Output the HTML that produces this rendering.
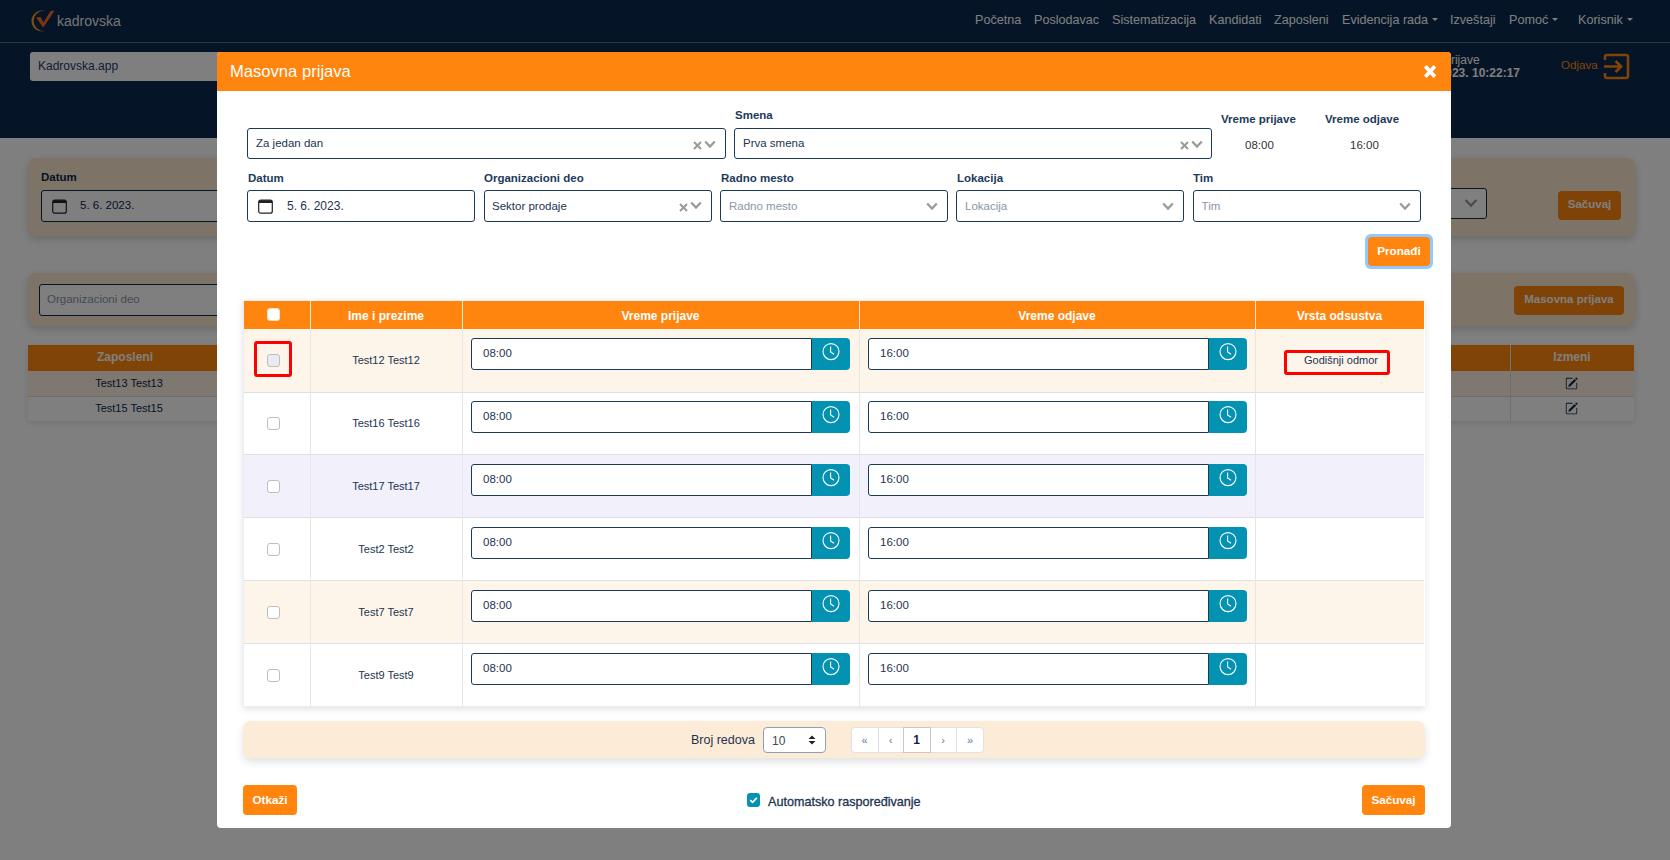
<!DOCTYPE html>
<html><head><meta charset="utf-8">
<style>
*{box-sizing:border-box;margin:0;padding:0}
html,body{width:1670px;height:860px;overflow:hidden}
body{position:relative;background:#fff;font-family:"Liberation Sans",sans-serif;color:#1d3450}
.a{position:absolute}
.t{position:absolute;line-height:1;white-space:nowrap}
.b{font-weight:bold}
/* background page */
.nav{position:absolute;left:0;top:0;width:1670px;height:43px;background:#0a284c;border-bottom:1px solid #5a6a80}
.sub{position:absolute;left:0;top:43px;width:1670px;height:95px;background:#0a284c}
.navi{position:absolute;top:13.5px;font-size:12.6px;line-height:1;color:#fff;white-space:nowrap}
.caret{display:inline-block;width:0;height:0;border-left:3px solid transparent;border-right:3px solid transparent;border-top:3.5px solid #fff;vertical-align:middle;margin-left:4px;position:relative;top:-1px}
.card{position:absolute;left:28px;width:1607px;background:#fae6ce;border-radius:8px;box-shadow:0 3px 8px rgba(0,0,0,.18)}
.binp{position:absolute;border:1px solid #0d2a4a;border-radius:3px;background:#fff}
.obtn{position:absolute;background:#ff850e;border-radius:4px;color:#fff;font-weight:bold;font-size:11.5px;line-height:1;text-align:center}
.overlay{position:absolute;left:0;top:0;width:1670px;height:860px;background:rgba(0,0,0,.5)}
/* modal */
.modal{position:absolute;left:217px;top:52px;width:1234px;height:776px;background:#fff;border-radius:4px;overflow:hidden}
.mh{position:absolute;left:0;top:0;width:1234px;height:39px;background:#ff850e}
.lbl{position:absolute;line-height:1;font-size:12px;font-weight:bold;color:#1d3a5a;white-space:nowrap}
.inp{position:absolute;border:1px solid #1b3a58;border-radius:3px;background:#fff;white-space:nowrap}
.it{position:absolute;line-height:1;font-size:11.5px;color:#1d3450}
.ph{color:#8996a4}
.xi{position:absolute}
</style></head><body>
<!-- ========== BACKGROUND PAGE ========== -->
<div class="nav"></div>
<div class="sub"></div>
<!-- logo -->
<svg class="a" style="left:30px;top:9px" width="26" height="24" viewBox="0 0 26 24">
  <path d="M14.5 1.9 A10.4 10.4 0 1 0 15.5 21.7 A10 10 0 1 1 14.5 1.9 Z" fill="#f0a020"/>
  <path d="M6 8.5 L10.5 8 L13.5 13.5 L20.5 2 L24.5 1.8 L13.2 18.5 Z" fill="#ff6a22"/>
</svg>
<div class="t" style="left:57px;top:14px;font-size:14px;color:#e4e8ee">kadrovska</div>
<div class="navi" style="left:975px">Početna</div>
<div class="navi" style="left:1034px">Poslodavac</div>
<div class="navi" style="left:1112px">Sistematizacija</div>
<div class="navi" style="left:1209px">Kandidati</div>
<div class="navi" style="left:1274px">Zaposleni</div>
<div class="navi" style="left:1342px">Evidencija rada<span class="caret"></span></div>
<div class="navi" style="left:1450px">Izveštaji</div>
<div class="navi" style="left:1509px">Pomoć<span class="caret"></span></div>
<div class="navi" style="left:1578px">Korisnik<span class="caret"></span></div>
<!-- sub header -->
<div class="a" style="left:30px;top:52px;width:400px;height:29px;background:#fff;border-radius:3px"></div>
<div class="t" style="left:38px;top:60px;font-size:12px;color:#1d3c6a">Kadrovska.app</div>
<div class="t" style="left:1406px;top:54px;font-size:12px;color:#fff">Vreme prijave</div>
<div class="t b" style="left:1403px;top:67px;font-size:12px;color:#fff;width:117px;text-align:right">5. 6. 2023. 10:22:17</div>
<div class="t" style="left:1561px;top:59px;font-size:11.6px;color:#ff8a10">Odjava</div>
<svg class="a" style="left:1602px;top:52px" width="29" height="29" viewBox="0 0 29 29">
  <path d="M3 8 V5 Q3 3 5 3 H24 Q26 3 26 5 V24 Q26 26 24 26 H5 Q3 26 3 24 V21" fill="none" stroke="#ff8a10" stroke-width="2.6"/>
  <path d="M2 14.5 H19 M13.5 9 L19.2 14.5 L13.5 20" fill="none" stroke="#ff8a10" stroke-width="2.6"/>
</svg>
<!-- card 1 -->
<div class="card" style="top:158px;height:78px"></div>
<div class="lbl" style="left:41px;top:172px;font-size:11.5px;color:#0d2a4a">Datum</div>
<div class="binp" style="left:41px;top:190px;width:400px;height:32px"></div>
<div class="t" style="left:80px;top:200px;font-size:11.5px;color:#0d2a4a">5. 6. 2023.</div>
<div class="binp" style="left:1300px;top:188px;width:187px;height:31px"></div>
<svg class="a" style="left:1464px;top:198px" width="14" height="10" viewBox="0 0 14 10"><path d="M1.5 2 L7 7.5 L12.5 2" fill="none" stroke="#999" stroke-width="2.4"/></svg>
<div class="obtn" style="left:1558px;top:191px;width:63px;height:29px;padding-top:8px">Sačuvaj</div>
<!-- card 2 -->
<div class="card" style="top:273px;height:53px"></div>
<div class="binp" style="left:39px;top:284px;width:400px;height:32px"></div>
<div class="t" style="left:47px;top:294px;font-size:11.5px;color:#8996a4">Organizacioni deo</div>
<div class="obtn" style="left:1514px;top:286px;width:110px;height:29px;padding-top:8px">Masovna prijava</div>
<!-- bg table -->
<div class="a" style="left:28px;top:345px;width:1606px;height:76px;box-shadow:0 2px 6px rgba(0,0,0,.12)"></div>
<div class="a" style="left:28px;top:345px;width:1606px;height:26px;background:#ff880c"></div>
<div class="a" style="left:1510px;top:345px;width:1px;height:76px;background:#e6e6e6"></div>
<div class="t b" style="left:28px;top:351px;width:194px;text-align:center;font-size:12px;color:#fff">Zaposleni</div>
<div class="t b" style="left:1510px;top:351px;width:124px;text-align:center;font-size:12px;color:#fff">Izmeni</div>
<div class="a" style="left:28px;top:371px;width:1606px;height:26px;background:#fdf0e2;border-bottom:1px solid #ddd"></div>
<div class="a" style="left:28px;top:397px;width:1606px;height:24px;background:#fff"></div>
<div class="a" style="left:1510px;top:371px;width:1px;height:50px;background:#ddd"></div>
<div class="t" style="left:32px;top:378px;width:194px;text-align:center;font-size:11px;color:#0d2a4a">Test13 Test13</div>
<div class="t" style="left:32px;top:403px;width:194px;text-align:center;font-size:11px;color:#0d2a4a">Test15 Test15</div>

<svg class="a" style="left:1565px;top:377px" width="13" height="13" viewBox="0 0 16 16" fill="#0d2a4a"><path d="M15.502 1.94a.5.5 0 0 1 0 .706L14.459 3.69l-2-2L13.502.646a.5.5 0 0 1 .707 0l1.293 1.293zm-1.75 2.456-2-2L4.939 9.21a.5.5 0 0 0-.121.196l-.805 2.414a.25.25 0 0 0 .316.316l2.414-.805a.5.5 0 0 0 .196-.12l6.813-6.814z"/><path fill-rule="evenodd" d="M1 13.5A1.5 1.5 0 0 0 2.5 15h11a1.5 1.5 0 0 0 1.5-1.5v-6a.5.5 0 0 0-1 0v6a.5.5 0 0 1-.5.5h-11a.5.5 0 0 1-.5-.5v-11a.5.5 0 0 1 .5-.5H9a.5.5 0 0 0 0-1H2.5A1.5 1.5 0 0 0 1 2.5v11z"/></svg>
<svg class="a" style="left:1565px;top:402px" width="13" height="13" viewBox="0 0 16 16" fill="#0d2a4a"><path d="M15.502 1.94a.5.5 0 0 1 0 .706L14.459 3.69l-2-2L13.502.646a.5.5 0 0 1 .707 0l1.293 1.293zm-1.75 2.456-2-2L4.939 9.21a.5.5 0 0 0-.121.196l-.805 2.414a.25.25 0 0 0 .316.316l2.414-.805a.5.5 0 0 0 .196-.12l6.813-6.814z"/><path fill-rule="evenodd" d="M1 13.5A1.5 1.5 0 0 0 2.5 15h11a1.5 1.5 0 0 0 1.5-1.5v-6a.5.5 0 0 0-1 0v6a.5.5 0 0 1-.5.5h-11a.5.5 0 0 1-.5-.5v-11a.5.5 0 0 1 .5-.5H9a.5.5 0 0 0 0-1H2.5A1.5 1.5 0 0 0 1 2.5v11z"/></svg>
<svg class="a" style="left:52px;top:199px" width="15" height="15" viewBox="0 0 15 15"><rect x="0.7" y="1.2" width="13.6" height="13" rx="2" fill="none" stroke="#222" stroke-width="1.2"/><path d="M0.7 3.2 Q0.7 1.2 2.7 1.2 H12.3 Q14.3 1.2 14.3 3.2 V4 H0.7 Z" fill="#222"/></svg>
<div class="overlay"></div>

<!-- ========== MODAL ========== -->
<div class="modal"><div class="mh"></div></div>
<div class="t" style="left:230px;top:64px;font-size:16.6px;font-weight:normal;color:#fff;">Masovna prijava</div>
<svg class="a" style="left:1421px;top:63px" width="18" height="17" viewBox="0 0 18 17"><path d="M4.3 3.3 L13.9 13.7 M13.9 3.3 L4.3 13.7" stroke="#fff" stroke-width="3.8" stroke-linecap="butt"/></svg>
<div class="t" style="left:735px;top:110px;font-size:11.5px;font-weight:bold;color:#1d3a5a;">Smena</div>
<div class="t" style="left:1221px;top:114px;font-size:11.5px;font-weight:bold;color:#1d3a5a;">Vreme prijave</div>
<div class="t" style="left:1325px;top:114px;font-size:11.5px;font-weight:bold;color:#1d3a5a;">Vreme odjave</div>
<div class="a" style="left:247px;top:128px;width:479px;height:31px;border:1px solid #1b3a58;border-radius:3px;background:#fff"></div>
<div class="t" style="left:256px;top:137.6px;font-size:11.5px;font-weight:normal;color:#1d3450;">Za jedan dan</div>
<svg class="a" style="left:693px;top:141px" width="9" height="9" viewBox="0 0 9 9"><path d="M1 1 L8 8 M8 1 L1 8" stroke="#9a9a9a" stroke-width="2"/></svg>
<svg class="a" style="left:704px;top:140px" width="12" height="9" viewBox="0 0 12 9"><path d="M1.2 1.5 L6 6.5 L10.8 1.5" fill="none" stroke="#9a9a9a" stroke-width="2.3"/></svg>
<div class="a" style="left:734px;top:128px;width:478px;height:31px;border:1px solid #1b3a58;border-radius:3px;background:#fff"></div>
<div class="t" style="left:743px;top:137.6px;font-size:11.5px;font-weight:normal;color:#1d3450;">Prva smena</div>
<svg class="a" style="left:1180px;top:141px" width="9" height="9" viewBox="0 0 9 9"><path d="M1 1 L8 8 M8 1 L1 8" stroke="#9a9a9a" stroke-width="2"/></svg>
<svg class="a" style="left:1191px;top:140px" width="12" height="9" viewBox="0 0 12 9"><path d="M1.2 1.5 L6 6.5 L10.8 1.5" fill="none" stroke="#9a9a9a" stroke-width="2.3"/></svg>
<div class="t" style="left:1245px;top:140px;font-size:11.5px;font-weight:normal;color:#333;">08:00</div>
<div class="t" style="left:1350px;top:140px;font-size:11.5px;font-weight:normal;color:#333;">16:00</div>
<div class="t" style="left:248px;top:173px;font-size:11.5px;font-weight:bold;color:#1d3a5a;">Datum</div>
<div class="t" style="left:484px;top:173px;font-size:11.5px;font-weight:bold;color:#1d3a5a;">Organizacioni deo</div>
<div class="t" style="left:721px;top:173px;font-size:11.5px;font-weight:bold;color:#1d3a5a;">Radno mesto</div>
<div class="t" style="left:957px;top:173px;font-size:11.5px;font-weight:bold;color:#1d3a5a;">Lokacija</div>
<div class="t" style="left:1193px;top:173px;font-size:11.5px;font-weight:bold;color:#1d3a5a;">Tim</div>
<div class="a" style="left:247px;top:190px;width:228px;height:32px;border:1px solid #1b3a58;border-radius:3px;background:#fff"></div>
<div class="a" style="left:484px;top:190px;width:228px;height:32px;border:1px solid #1b3a58;border-radius:3px;background:#fff"></div>
<div class="a" style="left:720px;top:190px;width:228px;height:32px;border:1px solid #1b3a58;border-radius:3px;background:#fff"></div>
<div class="a" style="left:956px;top:190px;width:228px;height:32px;border:1px solid #1b3a58;border-radius:3px;background:#fff"></div>
<div class="a" style="left:1193px;top:190px;width:228px;height:32px;border:1px solid #1b3a58;border-radius:3px;background:#fff"></div>
<svg class="a" style="left:258px;top:199px" width="15" height="15" viewBox="0 0 15 15"><rect x="0.7" y="1.2" width="13.6" height="13" rx="2" fill="none" stroke="#222" stroke-width="1.2"/><path d="M0.7 3.2 Q0.7 1.2 2.7 1.2 H12.3 Q14.3 1.2 14.3 3.2 V4 H0.7 Z" fill="#222"/></svg>
<div class="t" style="left:287px;top:200px;font-size:12px;font-weight:normal;color:#1d3450;">5. 6. 2023.</div>
<div class="t" style="left:492px;top:200.6px;font-size:11.5px;font-weight:normal;color:#1d3450;">Sektor prodaje</div>
<svg class="a" style="left:679px;top:203px" width="9" height="9" viewBox="0 0 9 9"><path d="M1 1 L8 8 M8 1 L1 8" stroke="#9a9a9a" stroke-width="2"/></svg>
<svg class="a" style="left:690px;top:201px" width="12" height="9" viewBox="0 0 12 9"><path d="M1.2 1.5 L6 6.5 L10.8 1.5" fill="none" stroke="#9a9a9a" stroke-width="2.3"/></svg>
<div class="t" style="left:729px;top:200.6px;font-size:11.5px;font-weight:normal;color:#8996a4;">Radno mesto</div>
<svg class="a" style="left:926px;top:202px" width="12" height="9" viewBox="0 0 12 9"><path d="M1.2 1.5 L6 6.5 L10.8 1.5" fill="none" stroke="#9a9a9a" stroke-width="2.3"/></svg>
<div class="t" style="left:965px;top:200.6px;font-size:11.5px;font-weight:normal;color:#8996a4;">Lokacija</div>
<svg class="a" style="left:1162px;top:202px" width="12" height="9" viewBox="0 0 12 9"><path d="M1.2 1.5 L6 6.5 L10.8 1.5" fill="none" stroke="#9a9a9a" stroke-width="2.3"/></svg>
<div class="t" style="left:1201.6px;top:200.6px;font-size:11.5px;font-weight:normal;color:#8996a4;">Tim</div>
<svg class="a" style="left:1399px;top:202px" width="12" height="9" viewBox="0 0 12 9"><path d="M1.2 1.5 L6 6.5 L10.8 1.5" fill="none" stroke="#9a9a9a" stroke-width="2.3"/></svg>
<div class="a" style="left:1365px;top:234px;width:68px;height:35px;background:#90c8ff;border-radius:6px"></div>
<div class="a" style="left:1368px;top:237px;width:62px;height:29px;background:#ff850e;border-radius:4px"></div>
<div class="t" style="left:1368px;width:62px;text-align:center;top:245px;font-size:11.7px;font-weight:bold;color:#fff;">Pronađi</div>
<div class="a" style="left:243px;top:300px;width:1182px;height:407px;box-shadow:0 2px 7px rgba(0,0,0,.13);background:#fff;border:1px solid #eaeef3;border-right-color:#fff"></div>
<div class="a" style="left:244px;top:301px;width:1180px;height:28px;background:#ff850e"></div>
<div class="a" style="left:310px;top:301px;width:1px;height:28px;background:#ffe6cc"></div>
<div class="a" style="left:462px;top:301px;width:1px;height:28px;background:#ffe6cc"></div>
<div class="a" style="left:859px;top:301px;width:1px;height:28px;background:#ffe6cc"></div>
<div class="a" style="left:1255px;top:301px;width:1px;height:28px;background:#ffe6cc"></div>
<div class="t" style="left:310px;width:152px;text-align:center;top:310px;font-size:12px;font-weight:bold;color:#fff;">Ime i prezime</div>
<div class="t" style="left:462px;width:397px;text-align:center;top:310px;font-size:12px;font-weight:bold;color:#fff;">Vreme prijave</div>
<div class="t" style="left:859px;width:396px;text-align:center;top:310px;font-size:12px;font-weight:bold;color:#fff;">Vreme odjave</div>
<div class="t" style="left:1255px;width:169px;text-align:center;top:310px;font-size:12px;font-weight:bold;color:#fff;">Vrsta odsustva</div>
<div class="a" style="left:267px;top:308px;width:13px;height:13px;background:#fff;border-radius:3px;border:1px solid #ffe0c0"></div>
<div class="a" style="left:244px;top:329px;width:1180px;height:63px;background:#fdf5ea"></div>
<div class="a" style="left:244px;top:392px;width:1180px;height:1px;background:#dde1e6"></div>
<div class="a" style="left:267px;top:354px;width:13px;height:13px;background:#e8ebef;border:1px solid #b9bfc7;border-radius:3px"></div>
<div class="t" style="left:310px;width:152px;text-align:center;top:355px;font-size:11px;font-weight:normal;color:#1d3450;">Test12 Test12</div>
<div class="a" style="left:471px;top:338px;width:341px;height:32px;border:1px solid #1b3a58;border-radius:3px 0 0 3px;background:#fff"></div>
<div class="t" style="left:483px;top:348px;font-size:11.5px;font-weight:normal;color:#1d3450;">08:00</div>
<div class="a" style="left:812px;top:338px;width:38px;height:32px;background:#0492b2;border-radius:0 4px 4px 0"></div>
<svg class="a" style="left:822px;top:343px" width="18" height="18" viewBox="0 0 18 18"><circle cx="9" cy="8.6" r="8" fill="none" stroke="#fff" stroke-width="1.1"/><path d="M8.6 3.6 V9 L12 11.3" fill="none" stroke="#fff" stroke-width="1.1"/></svg>
<div class="a" style="left:868px;top:338px;width:341px;height:32px;border:1px solid #1b3a58;border-radius:3px 0 0 3px;background:#fff"></div>
<div class="t" style="left:880px;top:348px;font-size:11.5px;font-weight:normal;color:#1d3450;">16:00</div>
<div class="a" style="left:1209px;top:338px;width:38px;height:32px;background:#0492b2;border-radius:0 4px 4px 0"></div>
<svg class="a" style="left:1219px;top:343px" width="18" height="18" viewBox="0 0 18 18"><circle cx="9" cy="8.6" r="8" fill="none" stroke="#fff" stroke-width="1.1"/><path d="M8.6 3.6 V9 L12 11.3" fill="none" stroke="#fff" stroke-width="1.1"/></svg>
<div class="a" style="left:244px;top:393px;width:1180px;height:61px;background:#fff"></div>
<div class="a" style="left:244px;top:454px;width:1180px;height:1px;background:#dde1e6"></div>
<div class="a" style="left:267px;top:417px;width:13px;height:13px;background:#fff;border:1px solid #b9bfc7;border-radius:3px"></div>
<div class="t" style="left:310px;width:152px;text-align:center;top:418px;font-size:11px;font-weight:normal;color:#1d3450;">Test16 Test16</div>
<div class="a" style="left:471px;top:401px;width:341px;height:32px;border:1px solid #1b3a58;border-radius:3px 0 0 3px;background:#fff"></div>
<div class="t" style="left:483px;top:411px;font-size:11.5px;font-weight:normal;color:#1d3450;">08:00</div>
<div class="a" style="left:812px;top:401px;width:38px;height:32px;background:#0492b2;border-radius:0 4px 4px 0"></div>
<svg class="a" style="left:822px;top:406px" width="18" height="18" viewBox="0 0 18 18"><circle cx="9" cy="8.6" r="8" fill="none" stroke="#fff" stroke-width="1.1"/><path d="M8.6 3.6 V9 L12 11.3" fill="none" stroke="#fff" stroke-width="1.1"/></svg>
<div class="a" style="left:868px;top:401px;width:341px;height:32px;border:1px solid #1b3a58;border-radius:3px 0 0 3px;background:#fff"></div>
<div class="t" style="left:880px;top:411px;font-size:11.5px;font-weight:normal;color:#1d3450;">16:00</div>
<div class="a" style="left:1209px;top:401px;width:38px;height:32px;background:#0492b2;border-radius:0 4px 4px 0"></div>
<svg class="a" style="left:1219px;top:406px" width="18" height="18" viewBox="0 0 18 18"><circle cx="9" cy="8.6" r="8" fill="none" stroke="#fff" stroke-width="1.1"/><path d="M8.6 3.6 V9 L12 11.3" fill="none" stroke="#fff" stroke-width="1.1"/></svg>
<div class="a" style="left:244px;top:455px;width:1180px;height:62px;background:#f1f0fb"></div>
<div class="a" style="left:244px;top:517px;width:1180px;height:1px;background:#dde1e6"></div>
<div class="a" style="left:267px;top:480px;width:13px;height:13px;background:#fff;border:1px solid #b9bfc7;border-radius:3px"></div>
<div class="t" style="left:310px;width:152px;text-align:center;top:481px;font-size:11px;font-weight:normal;color:#1d3450;">Test17 Test17</div>
<div class="a" style="left:471px;top:464px;width:341px;height:32px;border:1px solid #1b3a58;border-radius:3px 0 0 3px;background:#fff"></div>
<div class="t" style="left:483px;top:474px;font-size:11.5px;font-weight:normal;color:#1d3450;">08:00</div>
<div class="a" style="left:812px;top:464px;width:38px;height:32px;background:#0492b2;border-radius:0 4px 4px 0"></div>
<svg class="a" style="left:822px;top:469px" width="18" height="18" viewBox="0 0 18 18"><circle cx="9" cy="8.6" r="8" fill="none" stroke="#fff" stroke-width="1.1"/><path d="M8.6 3.6 V9 L12 11.3" fill="none" stroke="#fff" stroke-width="1.1"/></svg>
<div class="a" style="left:868px;top:464px;width:341px;height:32px;border:1px solid #1b3a58;border-radius:3px 0 0 3px;background:#fff"></div>
<div class="t" style="left:880px;top:474px;font-size:11.5px;font-weight:normal;color:#1d3450;">16:00</div>
<div class="a" style="left:1209px;top:464px;width:38px;height:32px;background:#0492b2;border-radius:0 4px 4px 0"></div>
<svg class="a" style="left:1219px;top:469px" width="18" height="18" viewBox="0 0 18 18"><circle cx="9" cy="8.6" r="8" fill="none" stroke="#fff" stroke-width="1.1"/><path d="M8.6 3.6 V9 L12 11.3" fill="none" stroke="#fff" stroke-width="1.1"/></svg>
<div class="a" style="left:244px;top:518px;width:1180px;height:62px;background:#fff"></div>
<div class="a" style="left:244px;top:580px;width:1180px;height:1px;background:#dde1e6"></div>
<div class="a" style="left:267px;top:543px;width:13px;height:13px;background:#fff;border:1px solid #b9bfc7;border-radius:3px"></div>
<div class="t" style="left:310px;width:152px;text-align:center;top:544px;font-size:11px;font-weight:normal;color:#1d3450;">Test2 Test2</div>
<div class="a" style="left:471px;top:527px;width:341px;height:32px;border:1px solid #1b3a58;border-radius:3px 0 0 3px;background:#fff"></div>
<div class="t" style="left:483px;top:537px;font-size:11.5px;font-weight:normal;color:#1d3450;">08:00</div>
<div class="a" style="left:812px;top:527px;width:38px;height:32px;background:#0492b2;border-radius:0 4px 4px 0"></div>
<svg class="a" style="left:822px;top:532px" width="18" height="18" viewBox="0 0 18 18"><circle cx="9" cy="8.6" r="8" fill="none" stroke="#fff" stroke-width="1.1"/><path d="M8.6 3.6 V9 L12 11.3" fill="none" stroke="#fff" stroke-width="1.1"/></svg>
<div class="a" style="left:868px;top:527px;width:341px;height:32px;border:1px solid #1b3a58;border-radius:3px 0 0 3px;background:#fff"></div>
<div class="t" style="left:880px;top:537px;font-size:11.5px;font-weight:normal;color:#1d3450;">16:00</div>
<div class="a" style="left:1209px;top:527px;width:38px;height:32px;background:#0492b2;border-radius:0 4px 4px 0"></div>
<svg class="a" style="left:1219px;top:532px" width="18" height="18" viewBox="0 0 18 18"><circle cx="9" cy="8.6" r="8" fill="none" stroke="#fff" stroke-width="1.1"/><path d="M8.6 3.6 V9 L12 11.3" fill="none" stroke="#fff" stroke-width="1.1"/></svg>
<div class="a" style="left:244px;top:581px;width:1180px;height:62px;background:#fdf5ea"></div>
<div class="a" style="left:244px;top:643px;width:1180px;height:1px;background:#dde1e6"></div>
<div class="a" style="left:267px;top:606px;width:13px;height:13px;background:#fff;border:1px solid #b9bfc7;border-radius:3px"></div>
<div class="t" style="left:310px;width:152px;text-align:center;top:607px;font-size:11px;font-weight:normal;color:#1d3450;">Test7 Test7</div>
<div class="a" style="left:471px;top:590px;width:341px;height:32px;border:1px solid #1b3a58;border-radius:3px 0 0 3px;background:#fff"></div>
<div class="t" style="left:483px;top:600px;font-size:11.5px;font-weight:normal;color:#1d3450;">08:00</div>
<div class="a" style="left:812px;top:590px;width:38px;height:32px;background:#0492b2;border-radius:0 4px 4px 0"></div>
<svg class="a" style="left:822px;top:595px" width="18" height="18" viewBox="0 0 18 18"><circle cx="9" cy="8.6" r="8" fill="none" stroke="#fff" stroke-width="1.1"/><path d="M8.6 3.6 V9 L12 11.3" fill="none" stroke="#fff" stroke-width="1.1"/></svg>
<div class="a" style="left:868px;top:590px;width:341px;height:32px;border:1px solid #1b3a58;border-radius:3px 0 0 3px;background:#fff"></div>
<div class="t" style="left:880px;top:600px;font-size:11.5px;font-weight:normal;color:#1d3450;">16:00</div>
<div class="a" style="left:1209px;top:590px;width:38px;height:32px;background:#0492b2;border-radius:0 4px 4px 0"></div>
<svg class="a" style="left:1219px;top:595px" width="18" height="18" viewBox="0 0 18 18"><circle cx="9" cy="8.6" r="8" fill="none" stroke="#fff" stroke-width="1.1"/><path d="M8.6 3.6 V9 L12 11.3" fill="none" stroke="#fff" stroke-width="1.1"/></svg>
<div class="a" style="left:244px;top:644px;width:1180px;height:62px;background:#fff"></div>
<div class="a" style="left:310px;top:329px;width:1px;height:377px;background:#e6e6e6"></div>
<div class="a" style="left:462px;top:329px;width:1px;height:377px;background:#e6e6e6"></div>
<div class="a" style="left:859px;top:329px;width:1px;height:377px;background:#e6e6e6"></div>
<div class="a" style="left:1255px;top:329px;width:1px;height:377px;background:#e6e6e6"></div>
<div class="a" style="left:267px;top:669px;width:13px;height:13px;background:#fff;border:1px solid #b9bfc7;border-radius:3px"></div>
<div class="t" style="left:310px;width:152px;text-align:center;top:670px;font-size:11px;font-weight:normal;color:#1d3450;">Test9 Test9</div>
<div class="a" style="left:471px;top:653px;width:341px;height:32px;border:1px solid #1b3a58;border-radius:3px 0 0 3px;background:#fff"></div>
<div class="t" style="left:483px;top:663px;font-size:11.5px;font-weight:normal;color:#1d3450;">08:00</div>
<div class="a" style="left:812px;top:653px;width:38px;height:32px;background:#0492b2;border-radius:0 4px 4px 0"></div>
<svg class="a" style="left:822px;top:658px" width="18" height="18" viewBox="0 0 18 18"><circle cx="9" cy="8.6" r="8" fill="none" stroke="#fff" stroke-width="1.1"/><path d="M8.6 3.6 V9 L12 11.3" fill="none" stroke="#fff" stroke-width="1.1"/></svg>
<div class="a" style="left:868px;top:653px;width:341px;height:32px;border:1px solid #1b3a58;border-radius:3px 0 0 3px;background:#fff"></div>
<div class="t" style="left:880px;top:663px;font-size:11.5px;font-weight:normal;color:#1d3450;">16:00</div>
<div class="a" style="left:1209px;top:653px;width:38px;height:32px;background:#0492b2;border-radius:0 4px 4px 0"></div>
<svg class="a" style="left:1219px;top:658px" width="18" height="18" viewBox="0 0 18 18"><circle cx="9" cy="8.6" r="8" fill="none" stroke="#fff" stroke-width="1.1"/><path d="M8.6 3.6 V9 L12 11.3" fill="none" stroke="#fff" stroke-width="1.1"/></svg>
<div class="a" style="left:254px;top:341px;width:38px;height:36px;border:3.4px solid #ff0000;border-radius:3px"></div>
<div class="a" style="left:1284px;top:350px;width:106px;height:25px;border:3.4px solid #ff0000;border-radius:3px"></div>
<div class="t" style="left:1304px;top:355px;font-size:11px;font-weight:normal;color:#1d3450;">Godišnji odmor</div>
<div class="a" style="left:243px;top:721px;width:1182px;height:37px;background:#fcebd6;border-radius:8px;box-shadow:0 4px 8px rgba(0,0,0,.12)"></div>
<div class="t" style="left:691px;top:734px;font-size:12.5px;font-weight:normal;color:#1d3450;">Broj redova</div>
<div class="a" style="left:763px;top:727px;width:63px;height:26px;background:#fff;border:1px solid #8fa0b5;border-radius:4px"></div>
<div class="t" style="left:772px;top:735px;font-size:12px;font-weight:normal;color:#3a4a5a;">10</div>
<svg class="a" style="left:808px;top:735px" width="8" height="10" viewBox="0 0 8 10"><path d="M0.5 4 L4 0.5 L7.5 4 Z M0.5 6 L4 9.5 L7.5 6 Z" fill="#222"/></svg>
<div class="a" style="left:851px;top:727px;width:133px;height:26px;background:#fff;border:1px solid #dee2e6;border-radius:4px"></div>
<div class="a" style="left:878px;top:727px;width:1px;height:26px;background:#dee2e6"></div>
<div class="a" style="left:903px;top:727px;width:1px;height:26px;background:#dee2e6"></div>
<div class="a" style="left:930px;top:727px;width:1px;height:26px;background:#dee2e6"></div>
<div class="a" style="left:956px;top:727px;width:1px;height:26px;background:#dee2e6"></div>
<div class="a" style="left:903px;top:727px;width:28px;height:26px;border:1px solid #c8c8c8"></div>
<div class="t" style="left:851px;width:27px;text-align:center;top:735px;font-size:11px;font-weight:normal;color:#5a7aa0;">«</div>
<div class="t" style="left:878px;width:25px;text-align:center;top:735px;font-size:11px;font-weight:normal;color:#5a7aa0;">‹</div>
<div class="t" style="left:930px;width:26px;text-align:center;top:735px;font-size:11px;font-weight:normal;color:#5a7aa0;">›</div>
<div class="t" style="left:956px;width:28px;text-align:center;top:735px;font-size:11px;font-weight:normal;color:#5a7aa0;">»</div>
<div class="t" style="left:903px;width:27px;text-align:center;top:734px;font-size:12px;font-weight:bold;color:#0d1d4a;">1</div>
<div class="a" style="left:243px;top:785px;width:54px;height:30px;background:#ff850e;border-radius:4px"></div>
<div class="t" style="left:243px;width:54px;text-align:center;top:794px;font-size:11.7px;font-weight:bold;color:#fff;">Otkaži</div>
<div class="a" style="left:747px;top:793px;width:13px;height:14px;background:#0492b2;border-radius:3px"></div>
<svg class="a" style="left:747px;top:793px" width="13" height="14" viewBox="0 0 13 14"><path d="M3.3 7.2 L5.6 9.3 L9.8 4.8" fill="none" stroke="#fff" stroke-width="1.8"/></svg>
<div class="t" style="left:768px;top:796px;font-size:12.6px;font-weight:normal;color:#1d3450;-webkit-text-stroke:0.3px #1d3450">Automatsko raspoređivanje</div>
<div class="a" style="left:1362px;top:785px;width:63px;height:30px;background:#ff850e;border-radius:4px"></div>
<div class="t" style="left:1362px;width:63px;text-align:center;top:794px;font-size:11.7px;font-weight:bold;color:#fff;">Sačuvaj</div>
</body></html>
